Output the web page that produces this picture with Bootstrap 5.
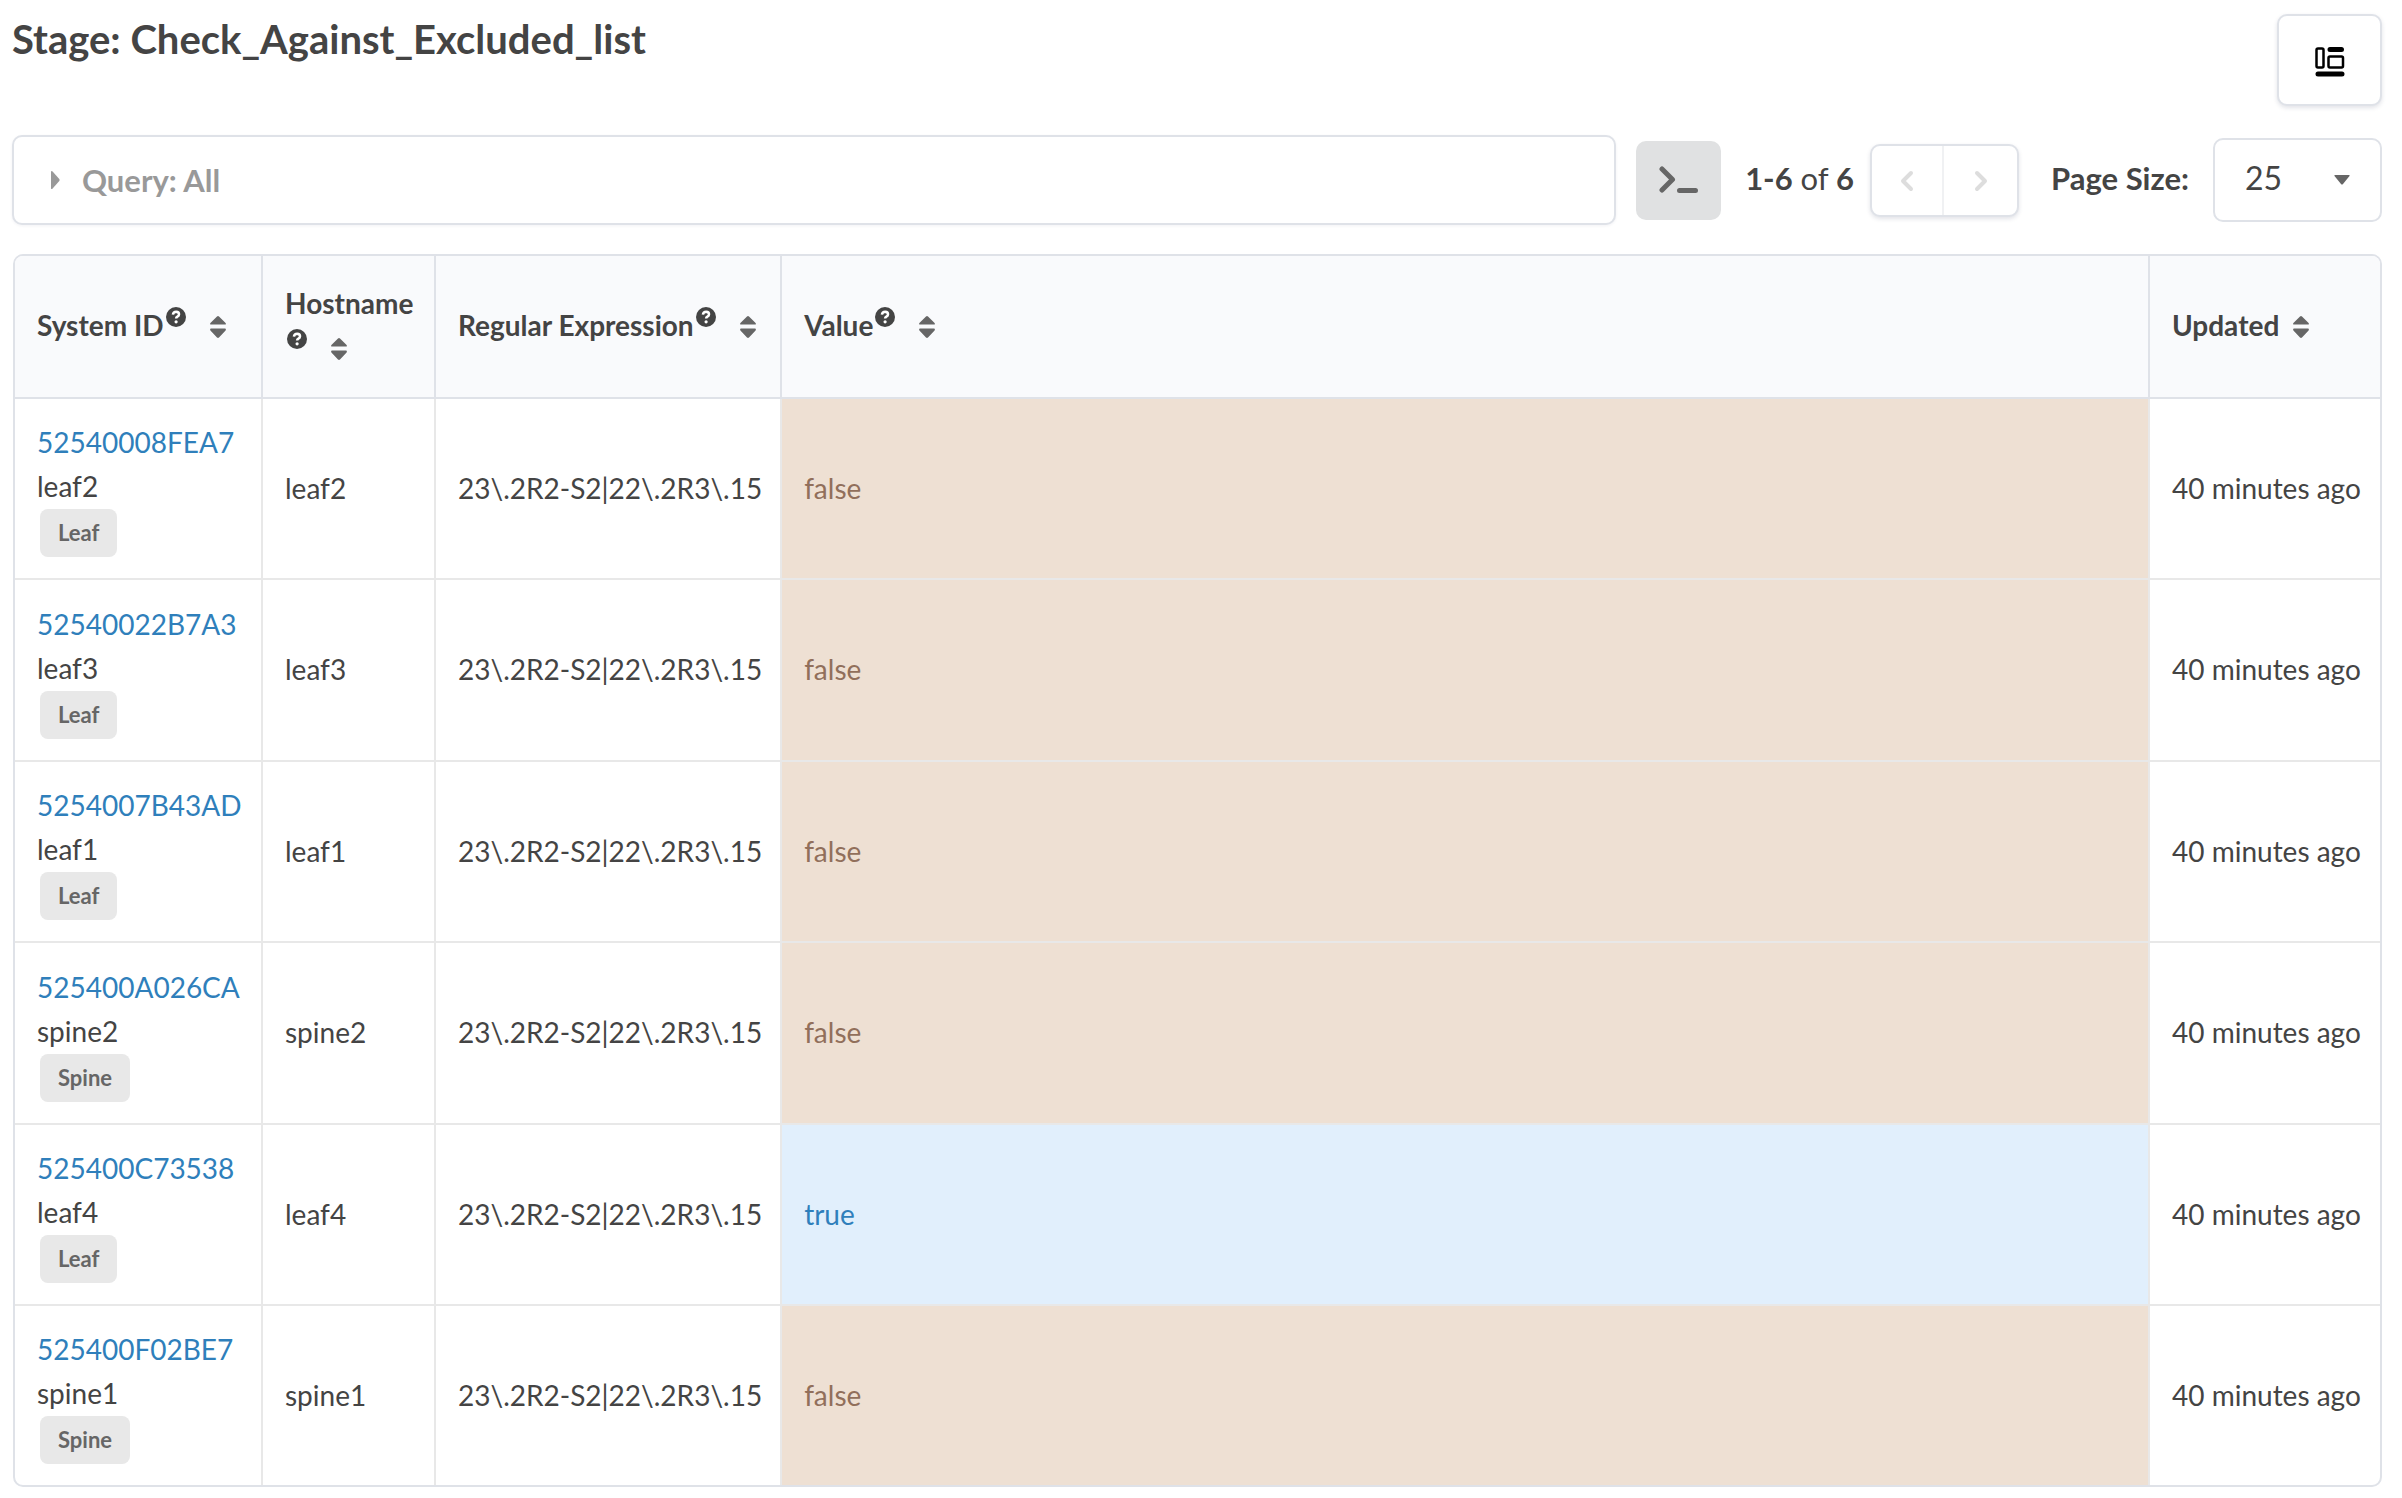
<!DOCTYPE html>
<html lang="en">
<head>
<meta charset="utf-8">
<meta name="viewport" content="width=device-width, initial-scale=1">
<title>Stage: Check_Against_Excluded_list</title>
<link href="https://cdn.jsdelivr.net/npm/bootstrap@5.3.0/dist/css/bootstrap.min.css" rel="stylesheet">
<style>
:root { --line: #dfe2e8; --cell-line: #e8e8e8; --ink: #444; --soft: #666; }
body { font-family: Lato, "Liberation Sans", sans-serif; font-size: 28px; line-height: 44px; color: var(--ink); background: #fff; }
.page { padding: 14px 20px 10px 12px; }
.stage-title { font-size: 40px; line-height: 50px; font-weight: 700; margin: 0; }
.top-row { min-height: 121px; }
.frame { border: 2px solid var(--line); border-radius: 10px; background: #fff; }
.raised { box-shadow: 0 2px 4px rgba(34, 36, 80, .13); }
.view-btn { width: 105px; height: 92px; padding: 3px 0 0; color: #000; }
.tools { gap: 16px; margin-bottom: 29px; }
.query-btn { height: 90px; padding: 0 32px; gap: 18px; color: #999; font-size: 31px; font-weight: 700; text-align: left; box-shadow: 0 1px 3px rgba(34, 36, 80, .06); }
.console-btn { width: 85px; height: 79px; border-radius: 10px; background: #e0e1e2; color: var(--soft); padding: 0; }
.tool-text { font-size: 31px; }
.pager { height: 73px; overflow: hidden; }
.pager .btn { width: 70px; color: #ddd; padding: 0; border: 0; border-radius: 0; }
.pager .btn + .btn { width: 75px; border-left: 2px solid #f0f1f3; }
.size-select { width: 169px; height: 84px; font-size: 32px; color: var(--ink); padding: 0 30px 4px; line-height: 44px;
  background: #fff url("data:image/svg+xml,%3Csvg xmlns='http://www.w3.org/2000/svg' viewBox='0 0 16 10'%3E%3Cpath d='M1 0h14q1 0 .5 1L9 9q-1 1-2 0L.5 1Q0 0 1 0z' fill='%23666'/%3E%3C/svg%3E") no-repeat right 30px center / 16px 10px; }
.grid-box { margin-left: 1px; overflow: hidden; }
.grid-table { border-collapse: separate; border-spacing: 0; width: 100%; margin: 0; }
.grid-table th, .grid-table td { padding: 0 18px 0 22px; vertical-align: middle; border: 0 solid var(--cell-line); border-bottom-width: 2px; }
.grid-table th { height: 143px; padding-bottom: 4px; background: #f9fafc; border-color: var(--line); }
.grid-table th + th, .grid-table td + td { border-left-width: 2px; }
.grid-table td + td { padding-bottom: 2px; }
.grid-table tbody td { height: 181px; }
.grid-table tbody tr:nth-child(even) td { height: 182px; }
.grid-table tbody tr:last-child td { height: 179px; border-bottom-width: 0; }
.c-id { width: 246px; } .c-host { width: 173px; } .c-regex { width: 346px; } .c-upd { width: 232px; }
.sys-link { color: #2f7fbb; text-decoration: none; }
.role-tag { display: inline-block; background: #e8e8e8; color: var(--soft); font-size: 22px; line-height: 24px; font-weight: 700; padding: 12px 18px; border-radius: 8px; margin-left: 3px; }
.is-false { background: #eee0d3; color: #916f5b; }
.is-true { background: #e1effc; color: #2f7fbb; }
.help-icon { width: 20px; height: 20px; margin-left: 2px; vertical-align: 9px; }
.sort-btn { display: inline-block; vertical-align: -2px; border: 0; background: none; padding: 0; margin-left: 24px; color: var(--soft); line-height: 22px; }
.sort-btn.near { margin-left: 14px; }
.sort-btn svg { width: 16px; height: 22px; display: block; }
</style>
<script src="https://cdn.jsdelivr.net/npm/bootstrap@5.3.0/dist/js/bootstrap.bundle.min.js"></script>
</head>
<body>
<svg class="d-none" aria-hidden="true">
  <symbol id="help" viewBox="0 0 20 20"><circle cx="10" cy="10" r="10" fill="#444"/><path d="M6.900 7.700Q7.300 4.700 10.200 4.700Q13.100 4.900 13 7.300Q12.900 8.800 11.400 9.600Q10.100 10.300 10.100 11.600" fill="none" stroke="#fff" stroke-width="2.500"/><circle cx="10.100" cy="14.800" r="1.600" fill="#fff"/></symbol>
  <symbol id="sort" viewBox="0 0 16 22"><path d="M7 .5q1-.9 2 0L15.600 7q.8 1.500-.6 1.500H1Q-.4 8.500.4 7zM7 21.500q1 .9 2 0L15.600 14.500Q16.400 12.500 15 12.500H1Q-.4 12.500 .4 14.500z" fill="currentColor"/></symbol>
</svg>
<main class="page">
  <header class="top-row d-flex justify-content-between align-items-start">
    <h1 class="stage-title">Stage: Check_Against_Excluded_list</h1>
    <button type="button" class="btn frame raised view-btn d-flex align-items-center justify-content-center" aria-label="Change layout">
      <svg width="30" height="30" viewBox="0 0 30 30" fill="none" stroke="currentColor" stroke-width="2.500"><rect x="1.500" y="1.500" width="7" height="19" rx="1.500"/><rect x="13.500" y="9.500" width="14.500" height="11" rx="1.500"/><path d="M15 2.500h11.500M3 27h24" stroke-width="5" stroke-linecap="round"/></svg>
    </button>
  </header>

  <section class="tools d-flex align-items-center">
    <button type="button" class="btn frame query-btn d-flex align-items-center flex-grow-1 me-1">
      <svg width="18" height="20" viewBox="0 0 18 20"><path d="M5 1.500q.6-1 1.600 0L13.300 9q.7 1 0 2L6.600 18.500q-1 1-1.600 0z" fill="currentColor"/></svg>
      <span>Query: All</span>
    </button>
    <button type="button" class="btn console-btn d-flex align-items-center justify-content-center" aria-label="Open console">
      <svg width="40" height="28" viewBox="0 0 40 28" fill="none" stroke="currentColor" stroke-width="5" stroke-linecap="round" stroke-linejoin="round"><path d="M3 3l10.500 10.500L3 24M20.500 24.500h16"/></svg>
    </button>
    <div class="tool-text text-nowrap ps-2 pb-1"><b>1-6</b> of <b>6</b></div>
    <div class="frame raised pager d-flex me-3" role="group" aria-label="Pages">
      <button type="button" class="btn" aria-label="Previous page"><svg width="14" height="22" viewBox="0 0 14 22" fill="none" stroke="currentColor" stroke-width="4" stroke-linecap="round" stroke-linejoin="round"><path d="M11 3L3 11l8 8"/></svg></button>
      <button type="button" class="btn" aria-label="Next page"><svg width="14" height="22" viewBox="0 0 14 22" fill="none" stroke="currentColor" stroke-width="4" stroke-linecap="round" stroke-linejoin="round"><path d="M3 3l8 8-8 8"/></svg></button>
    </div>
    <label for="page-size" class="tool-text fw-bold text-nowrap me-2 pb-1">Page Size:</label>
    <select id="page-size" class="form-select frame size-select"><option>25</option><option>50</option><option>100</option></select>
  </section>

  <div class="frame grid-box">
    <table class="grid-table">
      <thead>
        <tr>
          <th class="c-id text-nowrap">System ID<svg class="help-icon"><use href="#help"/></svg><button type="button" class="sort-btn" aria-label="Sort by System ID"><svg><use href="#sort"/></svg></button></th>
          <th class="c-host">Hostname <br><svg class="help-icon"><use href="#help"/></svg><button type="button" class="sort-btn" aria-label="Sort by Hostname"><svg><use href="#sort"/></svg></button></th>
          <th class="c-regex text-nowrap">Regular Expression<svg class="help-icon"><use href="#help"/></svg><button type="button" class="sort-btn" aria-label="Sort by Regular Expression"><svg><use href="#sort"/></svg></button></th>
          <th>Value<svg class="help-icon"><use href="#help"/></svg><button type="button" class="sort-btn" aria-label="Sort by Value"><svg><use href="#sort"/></svg></button></th>
          <th class="c-upd text-nowrap">Updated<button type="button" class="sort-btn near" aria-label="Sort by Updated"><svg><use href="#sort"/></svg></button></th>
        </tr>
      </thead>
      <tbody>
        <tr><td><a class="sys-link" href="#">52540008FEA7</a><div>leaf2</div><span class="role-tag">Leaf</span></td><td>leaf2</td><td class="text-nowrap">23\.2R2-S2|22\.2R3\.15</td><td class="is-false">false</td><td class="text-nowrap">40 minutes ago</td></tr>
        <tr><td><a class="sys-link" href="#">52540022B7A3</a><div>leaf3</div><span class="role-tag">Leaf</span></td><td>leaf3</td><td class="text-nowrap">23\.2R2-S2|22\.2R3\.15</td><td class="is-false">false</td><td class="text-nowrap">40 minutes ago</td></tr>
        <tr><td><a class="sys-link" href="#">5254007B43AD</a><div>leaf1</div><span class="role-tag">Leaf</span></td><td>leaf1</td><td class="text-nowrap">23\.2R2-S2|22\.2R3\.15</td><td class="is-false">false</td><td class="text-nowrap">40 minutes ago</td></tr>
        <tr><td><a class="sys-link" href="#">525400A026CA</a><div>spine2</div><span class="role-tag">Spine</span></td><td>spine2</td><td class="text-nowrap">23\.2R2-S2|22\.2R3\.15</td><td class="is-false">false</td><td class="text-nowrap">40 minutes ago</td></tr>
        <tr><td><a class="sys-link" href="#">525400C73538</a><div>leaf4</div><span class="role-tag">Leaf</span></td><td>leaf4</td><td class="text-nowrap">23\.2R2-S2|22\.2R3\.15</td><td class="is-true">true</td><td class="text-nowrap">40 minutes ago</td></tr>
        <tr><td><a class="sys-link" href="#">525400F02BE7</a><div>spine1</div><span class="role-tag">Spine</span></td><td>spine1</td><td class="text-nowrap">23\.2R2-S2|22\.2R3\.15</td><td class="is-false">false</td><td class="text-nowrap">40 minutes ago</td></tr>
      </tbody>
    </table>
  </div>
</main>
</body>
</html>
